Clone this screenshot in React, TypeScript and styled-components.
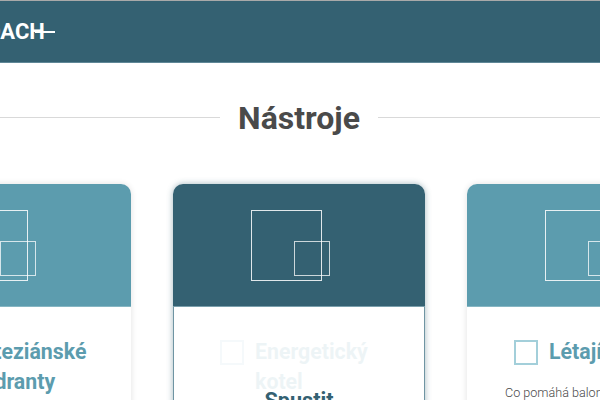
import styled, { createGlobalStyle } from "styled-components";

const GlobalStyle = createGlobalStyle`
  html, body {
    margin: 0;
    padding: 0;
    background: #fff;
    overflow: hidden;
  }
  body {
    font-family: Roboto, "Liberation Sans", sans-serif;
  }
`;

type Tool = {
  title: string;
  text?: string;
  active?: boolean;
};

const tools: Tool[] = [
  { title: "Karteziánské kvadranty" },
  { title: "Energetický kotel", active: true },
  { title: "Létající", text: "Co pomáhá balonu letět" },
];

export default function App() {
  return (
    <Page>
      <GlobalStyle />
      <Header>
        <Logo>COACH</Logo>
      </Header>
      <Heading>
        <HeadingText>Nástroje</HeadingText>
      </Heading>
      <Cards>
        {tools.map((tool) => (
          <Card key={tool.title} $active={tool.active}>
            <CardTop $active={tool.active}>
              <Artwork>
                <BigSquare />
                <SmallSquare />
              </Artwork>
            </CardTop>
            <CardBody $active={tool.active}>
              <TitleRow $faded={tool.active}>
                <TitleIcon />
                <Title>{tool.title}</Title>
              </TitleRow>
              {tool.text && <Description>{tool.text}</Description>}
              {tool.active && <RunLabel>Spustit</RunLabel>}
            </CardBody>
          </Card>
        ))}
      </Cards>
    </Page>
  );
}

const Page = styled.div`
  width: 600px;
  height: 400px;
  overflow: hidden;
  background: #fff;
`;

const Header = styled.header`
  height: 63px;
  box-sizing: border-box;
  border-top: 1px solid #a9a9a9;
  border-bottom: 1px solid #5f8797;
  background: #346172;
  display: flex;
  align-items: center;
`;

const Logo = styled.div`
  position: relative;
  flex: none;
  margin-left: -29px;
  color: #fff;
  font-size: 22px;
  font-weight: 700;
  line-height: 1;

  &::after {
    content: "";
    position: absolute;
    right: -10px;
    top: 10px;
    width: 20px;
    height: 2px;
    background: #fff;
  }
`;

const Heading = styled.div`
  height: 121px;
  box-sizing: border-box;
  margin-left: -2px;
  padding-bottom: 12px;
  display: flex;
  align-items: center;
  gap: 18px;

  &::before,
  &::after {
    content: "";
    flex: 1;
    height: 1px;
    background: #d9d9d9;
  }
`;

const HeadingText = styled.h1`
  margin: 0;
  color: #4a4a4a;
  font-size: 32px;
  font-weight: 700;
  line-height: 36px;
`;

const Cards = styled.div`
  display: flex;
  justify-content: center;
  gap: 42px;
  margin-right: 2px;
`;

const Card = styled.article<{ $active?: boolean }>`
  flex: 0 0 252px;
  height: 300px;
  border-radius: 10px;
  overflow: hidden;
  background: #fff;
  box-shadow: ${({ $active }) =>
    $active ? "0 0 6px rgba(52, 97, 114, 0.45)" : "0 0 6px rgba(0, 0, 0, 0.12)"};
`;

const CardTop = styled.div<{ $active?: boolean }>`
  height: 123px;
  box-sizing: border-box;
  display: flex;
  justify-content: center;
  padding-top: 26px;
  background: ${({ $active }) => ($active ? "#346172" : "#5c9cae")};
  border-bottom: 1px solid ${({ $active }) => ($active ? "#7a9fac" : "#86b6c3")};
`;

const Artwork = styled.div`
  position: relative;
  width: 96px;
  height: 71px;
`;

const BigSquare = styled.div`
  width: 71px;
  height: 71px;
  box-sizing: border-box;
  border: 1px solid rgba(255, 255, 255, 0.85);
`;

const SmallSquare = styled.div`
  position: absolute;
  left: 43px;
  top: 31px;
  width: 36px;
  height: 35px;
  box-sizing: border-box;
  border: 1px solid rgba(255, 255, 255, 0.75);
`;

const CardBody = styled.div<{ $active?: boolean }>`
  position: relative;
  height: 177px;
  box-sizing: border-box;
  padding: 33px 30px 0 47px;
  box-shadow: ${({ $active }) =>
    $active ? "inset 1px 0 #6f95a3, inset -1px 0 #6f95a3" : "none"};
`;

const TitleRow = styled.div<{ $faded?: boolean }>`
  display: flex;
  align-items: flex-start;
  gap: 11px;
  opacity: ${({ $faded }) => ($faded ? 0.1 : 1)};
`;

const TitleIcon = styled.div`
  flex: 0 0 24px;
  height: 25px;
  box-sizing: border-box;
  border: 2px solid #a3cfda;
`;

const Title = styled.h2`
  margin: -3px 0 0;
  color: #5c9cae;
  font-size: 21.3px;
  font-weight: 700;
  line-height: 30px;
`;

const Description = styled.p`
  margin: 18px 0 0 -9px;
  color: #4a4a4a;
  font-size: 12.6px;
  font-weight: 300;
  line-height: 16px;
  white-space: nowrap;
`;

const RunLabel = styled.div`
  position: absolute;
  left: 0;
  right: 0;
  top: 79px;
  text-align: center;
  color: #346172;
  font-size: 21.6px;
  font-weight: 700;
  line-height: 29px;
`;
